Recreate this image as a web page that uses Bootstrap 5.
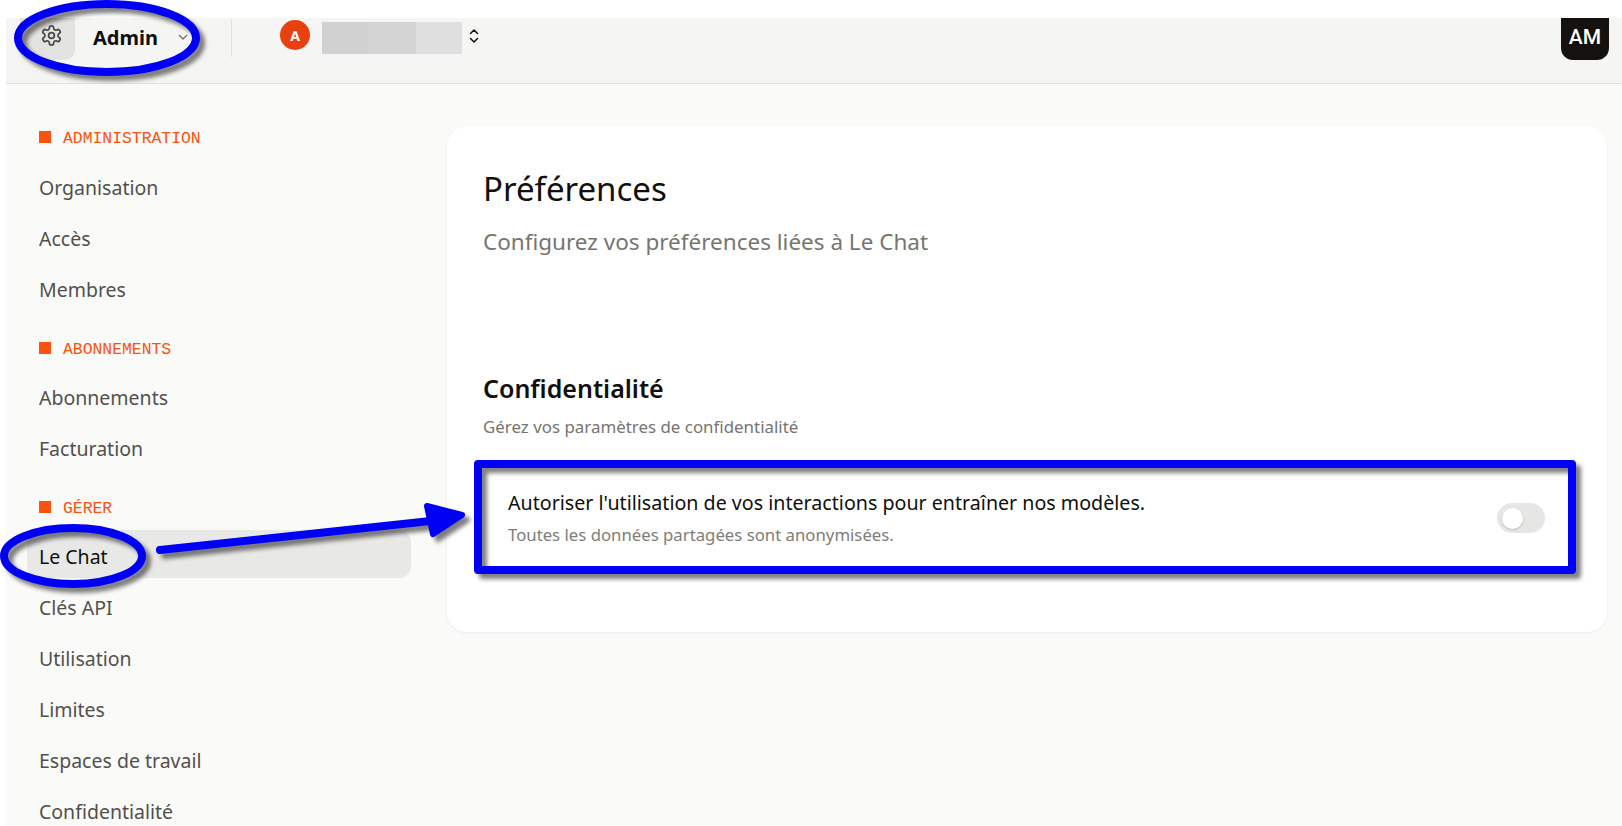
<!DOCTYPE html>
<html lang="fr">
  <head>
    <meta charset="UTF-8" />
    <meta name="viewport" content="width=device-width, initial-scale=1.0" />
    <title>Préférences</title>
    <link
      href="https://cdn.jsdelivr.net/npm/bootstrap@5.3.0/dist/css/bootstrap.min.css"
      rel="stylesheet"
    />
    <style>
      html, body { height: 100%; overflow: hidden; }
      body {
        background: #fff;
        font-family: "Noto Sans", "Liberation Sans", sans-serif;
        position: relative;
      }
      .app-shell {
        margin: 18px 0 0 6px;
        height: 808px;
        background: #fafaf8;
      }
      .top-bar {
        height: 66px;
        background: #f5f5f3;
        border-bottom: 1px solid #e2e2e0;
      }
      .gear-box {
        width: 55px;
        height: 42px;
        margin-left: 14px;
        padding: 0 12px 8px 0;
        background: #e3e3e1;
        border-radius: 0 0 10px 10px;
        color: #4a4a48;
      }
      .admin-label {
        height: 40px;
        font-size: 20px;
        font-weight: 700;
        color: #100f0d;
        width: 88px;
        margin-left: 18px;
      }
      .admin-caret {
        height: 42px;
        color: #77756f;
        width: 12px;
        margin: -2px 41px 0 -3px;
      }
      .top-sep { width: 1px; height: 39px; background: #e2e2e0; margin-right: 48px; }
      .org-dot {
        width: 30px;
        height: 30px;
        margin-top: 2px;
        border-radius: 50%;
        background: #ea3f0e;
        color: #fff;
        font-size: 14px;
        font-weight: 700;
        margin-right: 12px;
      }
      .blur-tile { height: 32px; }
      .blur-a { width: 46px; background: #d1d1d1; }
      .blur-b { width: 48px; background: #d4d4d4; }
      .blur-c { width: 46px; background: #dfdfdf; }
      .updown-icon { margin-left: 7px; margin-top: 4px; }
      .am-box {
        width: 48px;
        height: 42px;
        background: #14110e;
        color: #fff;
        border-radius: 0 0 12px 12px;
        font-family: Roboto, "Liberation Sans", sans-serif;
        font-weight: 500;
        font-size: 21px;
        padding-bottom: 2px;
        margin-right: 13px;
      }
      .side-col { width: 441px; padding: 0 0 0 21px; flex: none; }
      .side-head {
        font-family: "Liberation Mono", monospace;
        font-size: 16.4px;
        line-height: 20px;
        color: #fa520f;
        padding-left: 12px;
      }
      .side-head::before {
        content: "";
        display: inline-block;
        width: 12px;
        height: 12px;
        margin-right: 12px;
        background: #fa520f;
      }
      .head-admin { margin-top: 45px; margin-bottom: 15px; }
      .head-subs { margin-top: 26px; margin-bottom: 14px; }
      .head-manage { margin-top: 26px; margin-bottom: 11px; }
      .side-link {
        display: block;
        width: 384px;
        height: 48px;
        line-height: 48px;
        padding-left: 12px;
        margin-bottom: 3px;
        border-radius: 12px;
        font-size: 19.5px;
        color: #52504c;
        text-decoration: none;
      }
      .side-link.on {
        background: #e8e8e6;
        color: #100f0d;
        line-height: 54px;
        margin-bottom: 6px;
      }
      .pref-card {
        width: 1160px;
        height: 506px;
        margin-top: 42px;
        background: #fff;
        border-radius: 20px;
        box-shadow: 0 1px 3px #0000000f;
        padding: 0 36px;
      }
      .pref-title { font-size: 33px; font-weight: 400; color: #100f0d; margin: 0; line-height: 44px; padding-top: 41px; height: 100px; }
      .pref-sub { font-size: 22.5px; color: #77756f; line-height: 32px; margin: 0; }
      .pref-h2 { font-size: 25px; font-weight: 600; color: #100f0d; margin: 112px 0 0; line-height: 36px; }
      .pref-note { font-size: 16.9px; color: #77756f; line-height: 24px; margin: 9px 0 0; }
      .pref-row { padding: 0 26px 0 25px; margin-top: 50px; }
      .row-main { font-size: 19.65px; color: #100f0d; line-height: 28px; }
      .row-sub { font-size: 16.75px; color: #807e78; line-height: 24px; margin-top: 6px; }
      .toggle-track {
        width: 48px;
        height: 30px;
        border-radius: 15px;
        background: #e6e6e4;
        padding-left: 5px;
      }
      .toggle-knob {
        width: 21px;
        height: 21px;
        border-radius: 50%;
        background: #fff;
        box-shadow: 0 1px 2px #00000033;
      }
      /* annotation layer drawn over the screenshot */
      .markup-layer {
        position: absolute;
        left: 0;
        top: 0;
        width: 1622px;
        height: 826px;
        pointer-events: none;
        filter: drop-shadow(5px 5px 2px #00000080);
      }
    </style>
  </head>
  <body>
    <div class="app-shell">
      <header class="top-bar d-flex align-items-start">
        <div class="gear-box d-flex align-items-center justify-content-end flex-shrink-0">
          <svg width="23" height="23" viewBox="0 0 24 24" fill="none" stroke="currentColor" stroke-width="1.8" stroke-linecap="round" stroke-linejoin="round">
            <path d="M12.22 2h-.44a2 2 0 0 0-2 2v.18a2 2 0 0 1-1 1.73l-.43.25a2 2 0 0 1-2 0l-.15-.08a2 2 0 0 0-2.73.73l-.22.38a2 2 0 0 0 .73 2.73l.15.1a2 2 0 0 1 1 1.72v.51a2 2 0 0 1-1 1.74l-.15.09a2 2 0 0 0-.73 2.73l.22.38a2 2 0 0 0 2.73.73l.15-.08a2 2 0 0 1 2 0l.43.25a2 2 0 0 1 1 1.73V20a2 2 0 0 0 2 2h.44a2 2 0 0 0 2-2v-.18a2 2 0 0 1 1-1.73l.43-.25a2 2 0 0 1 2 0l.15.08a2 2 0 0 0 2.73-.73l.22-.39a2 2 0 0 0-.73-2.73l-.15-.08a2 2 0 0 1-1-1.74v-.5a2 2 0 0 1 1-1.74l.15-.09a2 2 0 0 0 .73-2.73l-.22-.38a2 2 0 0 0-2.73-.73l-.15.08a2 2 0 0 1-2 0l-.43-.25a2 2 0 0 1-1-1.73V4a2 2 0 0 0-2-2z"/>
            <circle cx="12" cy="12" r="3"/>
          </svg>
        </div>
        <div class="admin-label d-flex align-items-center">Admin</div>
        <div class="admin-caret d-flex align-items-center">
          <svg width="10" height="6" viewBox="0 0 10 6" fill="none" stroke="currentColor" stroke-width="1.4"><path d="M1 1l4 4 4-4"/></svg>
        </div>
        <div class="top-sep"></div>
        <div class="org-dot d-flex align-items-center justify-content-center flex-shrink-0">A</div>
        <div class="d-flex mt-1">
          <div class="blur-tile blur-a"></div>
          <div class="blur-tile blur-b"></div>
          <div class="blur-tile blur-c"></div>
        </div>
        <div class="updown-icon">
          <svg width="10" height="16" viewBox="0 0 10 16" fill="none" stroke="#100f0d" stroke-width="1.5" stroke-linecap="round" stroke-linejoin="round"><path d="M1.5 5.5L5 2l3.5 3.5M1.5 10.5L5 14l3.5-3.5"/></svg>
        </div>
        <div class="am-box d-flex align-items-center justify-content-center ms-auto">AM</div>
      </header>

      <div class="d-flex">
        <nav class="side-col">
          <div class="side-head head-admin">ADMINISTRATION</div>
          <a class="side-link" href="#">Organisation</a>
          <a class="side-link" href="#">Accès</a>
          <a class="side-link" href="#">Membres</a>
          <div class="side-head head-subs">ABONNEMENTS</div>
          <a class="side-link" href="#">Abonnements</a>
          <a class="side-link" href="#">Facturation</a>
          <div class="side-head head-manage">GÉRER</div>
          <a class="side-link on" href="#">Le Chat</a>
          <a class="side-link" href="#">Clés API</a>
          <a class="side-link" href="#">Utilisation</a>
          <a class="side-link" href="#">Limites</a>
          <a class="side-link" href="#">Espaces de travail</a>
          <a class="side-link" href="#">Confidentialité</a>
        </nav>

        <main class="pref-card">
          <h1 class="pref-title">Préférences</h1>
          <p class="pref-sub">Configurez vos préférences liées à Le Chat</p>
          <h2 class="pref-h2">Confidentialité</h2>
          <p class="pref-note">Gérez vos paramètres de confidentialité</p>
          <div class="pref-row d-flex align-items-center justify-content-between">
            <div>
              <div class="row-main">Autoriser l'utilisation de vos interactions pour entraîner nos modèles.</div>
              <div class="row-sub">Toutes les données partagées sont anonymisées.</div>
            </div>
            <div class="toggle-track d-flex align-items-center"><div class="toggle-knob"></div></div>
          </div>
        </main>
      </div>
    </div>

    <svg class="markup-layer" viewBox="0 0 1622 826" fill="none" stroke="#0000f5">
      <ellipse cx="107" cy="38" rx="89" ry="34" stroke-width="8"/>
      <ellipse cx="73" cy="556" rx="69" ry="28" stroke-width="8"/>
      <path d="M160 550L440 520" stroke-width="8" stroke-linecap="round"/>
      <path d="M427 506L462 515L433 534Z" fill="#0000f5" stroke-width="6" stroke-linejoin="round"/>
      <rect x="478" y="464" width="1094" height="106" stroke-width="8" stroke-linejoin="round"/>
    </svg>

    <script src="https://cdn.jsdelivr.net/npm/bootstrap@5.3.0/dist/js/bootstrap.bundle.min.js"></script>
  </body>
</html>
